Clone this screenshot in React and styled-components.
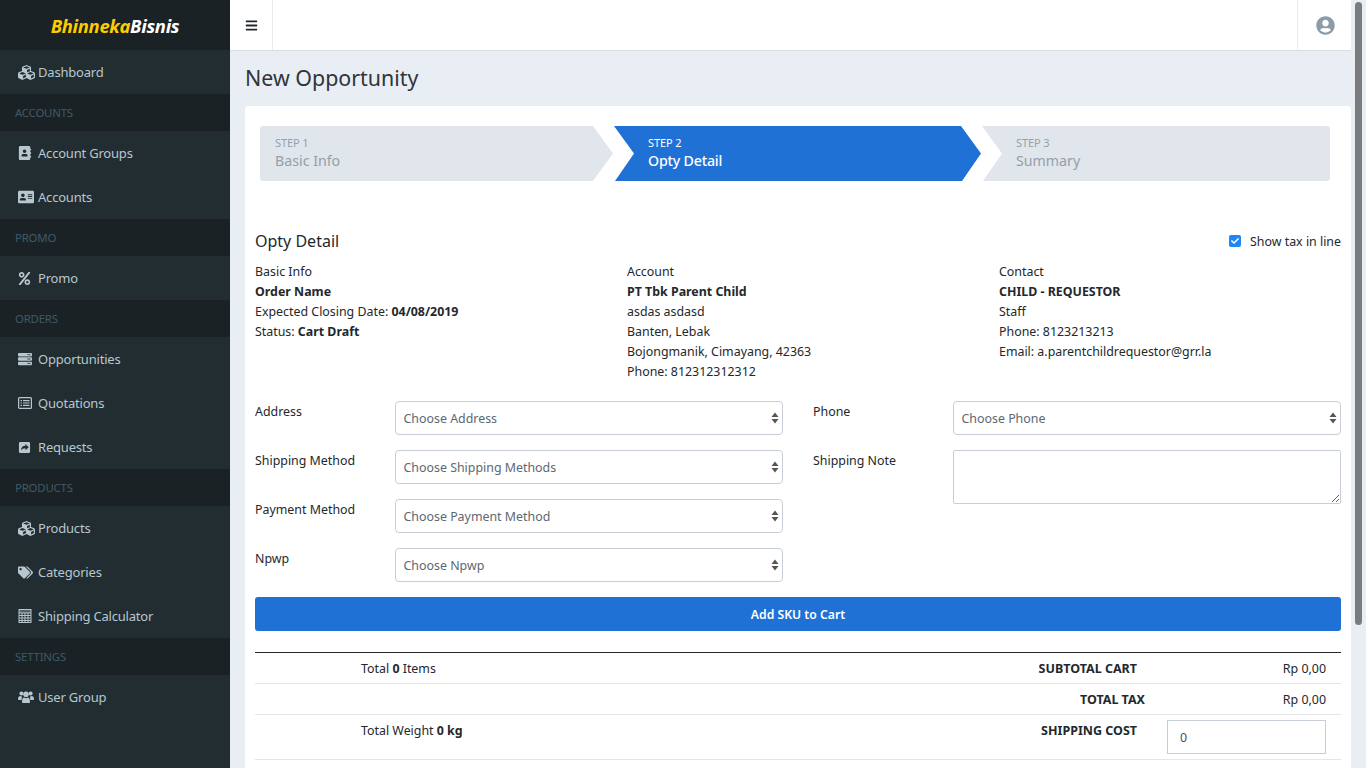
import React from 'react'
import styled, { createGlobalStyle } from 'styled-components'
import {
  FaCubes,
  FaAddressBook,
  FaAddressCard,
  FaPercent,
  FaServer,
  FaTags,
  FaBars,
  FaUserCircle,
  FaCheck,
} from 'react-icons/fa'

const GlobalStyle = createGlobalStyle`
  html, body {
    margin: 0;
    padding: 0;
    height: 768px;
    overflow: hidden;
  }
  body {
    font-family: "Noto Sans", "Liberation Sans", sans-serif;
    font-size: 12.4px;
    color: #23282c;
    background: #e9eef5;
  }
  * { box-sizing: border-box; }
`

const Shell = styled.div`
  display: flex;
  width: 1366px;
  height: 768px;
  overflow: hidden;
  position: relative;
`

const Sidebar = styled.aside`
  width: 230px;
  flex: none;
  background: #222d32;
  display: flex;
  flex-direction: column;
`

const Brand = styled.div`
  height: 50px;
  background: #1a2226;
  display: flex;
  align-items: center;
  justify-content: center;
  font-size: 18.4px;
  font-weight: 700;
  font-style: italic;
  color: #fff;
  letter-spacing: -0.3px;
  span { color: #ffcc00; }
`

const SectionTitle = styled.div`
  height: 37px;
  background: #1a2226;
  color: #3f5a67;
  font-size: 11.4px;
  letter-spacing: -0.2px;
  line-height: 38px;
  padding-left: 15px;
`

const NavItem = styled.div`
  height: 44px;
  display: flex;
  align-items: center;
  padding-left: 18px;
  color: #b8c7ce;
  font-size: 13px;
  letter-spacing: -0.2px;
`

const IconBox = styled.span`
  width: 20px;
  flex: none;
  display: flex;
  align-items: center;
  svg {
    width: ${p => p.$size}px;
    height: ${p => p.$size}px;
    display: block;
  }
`

const Main = styled.div`
  flex: 1;
  min-width: 0;
  display: flex;
  flex-direction: column;
`

const Topbar = styled.header`
  height: 51px;
  flex: none;
  background: #fff;
  border-bottom: 1px solid #d8dde3;
  display: flex;
  justify-content: space-between;
`

const Toggle = styled.div`
  width: 43px;
  border-right: 1px solid #e8ebef;
  display: flex;
  align-items: center;
  justify-content: center;
  color: #23282c;
  svg { width: 13px; height: 13px; }
`

const UserButton = styled.div`
  width: 69px;
  border-left: 1px solid #e8ebef;
  display: flex;
  align-items: center;
  justify-content: center;
  color: #8a9baa;
  padding-right: 14px;
  svg { width: 19px; height: 19px; }
`

const PageTitle = styled.h1`
  margin: 0;
  font-size: 21.4px;
  font-weight: 400;
  line-height: 30px;
  color: #2f3539;
  padding: 12px 0 13px 15px;
`

const Card = styled.section`
  margin: 0 15px;
  background: #fff;
  border-radius: 4px 4px 0 0;
  padding: 20px 10px 0;
  flex: 1;
`

const Steps = styled.div`
  display: flex;
  margin: 0 11px 0 5px;
  height: 55px;
`

const Step = styled.div`
  flex: ${p => p.$grow};
  margin-left: ${p => p.$first ? 0 : '1px'};
  background: ${p => p.$active ? '#1f71d6' : '#e0e6ec'};
  color: ${p => p.$active ? '#fff' : '#94a0ab'};
  border-radius: ${p => p.$radius};
  clip-path: ${p => p.$clip};
  padding: 9px 0 0 ${p => p.$pad};
`

const StepNumber = styled.div`
  font-size: 11px;
  line-height: 15px;
  letter-spacing: -0.1px;
`

const StepName = styled.div`
  font-size: 14.2px;
  line-height: 21px;
  font-weight: ${p => p.$active ? 500 : 400};
  letter-spacing: ${p => p.$active ? '-0.2px' : 0};
`

const DetailHead = styled.div`
  display: flex;
  justify-content: space-between;
  align-items: center;
  margin-top: 48px;
  height: 24px;
`

const DetailTitle = styled.h2`
  margin: 0;
  font-size: 16px;
  font-weight: 400;
`

const ShowTax = styled.label`
  display: flex;
  align-items: center;
  gap: 9px;
  font-size: 12.4px;
`

const CheckBox = styled.span`
  width: 12px;
  height: 12px;
  border-radius: 2px;
  background: #1f86f5;
  color: #fff;
  display: flex;
  align-items: center;
  justify-content: center;
  svg { width: 8px; height: 8px; }
`

const InfoGrid = styled.div`
  display: grid;
  grid-template-columns: 372px 372px 1fr;
  margin-top: 9px;
`

const InfoLine = styled.div`
  line-height: 20px;
  b { font-weight: 700; }
`

const FormGrid = styled.div`
  display: grid;
  grid-template-columns: 528px 528px;
  column-gap: 30px;
  margin-top: 19px;
`

const FormColumn = styled.div`
  display: flex;
  flex-direction: column;
  gap: 15px;
`

const FormRow = styled.div`
  display: flex;
  align-items: flex-start;
`

const FieldLabel = styled.div`
  width: 140px;
  flex: none;
  line-height: 20px;
  padding-top: 1px;
`

const SelectBox = styled.div`
  flex: 1;
  height: 34px;
  border: 1px solid #c8ced6;
  border-radius: 4px;
  padding-left: 7.5px;
  display: flex;
  align-items: center;
  justify-content: space-between;
  color: #5c6873;
  svg { width: 8px; height: 12px; margin-right: 3px; }
`

const NoteArea = styled.textarea`
  flex: 1;
  height: 54px;
  border: 1px solid #c8ced6;
  border-radius: 2px;
  outline: none;
  margin: 0;
  display: block;
`

const AddButton = styled.button`
  display: block;
  width: 100%;
  height: 34px;
  margin-top: 15px;
  border: 0;
  border-radius: 3px;
  background: #1f71d6;
  color: #fff;
  font-family: inherit;
  font-size: 12.2px;
  font-weight: 600;
`

const Totals = styled.div`
  margin-top: 21px;
  border-top: 1px solid #23282c;
`

const TotalRow = styled.div`
  display: grid;
  grid-template-columns: 106px 1fr 200px 196px;
  height: ${p => p.$tall ? '45px' : '31px'};
  border-bottom: 1px solid #e4e7ea;
  align-items: ${p => p.$tall ? 'start' : 'center'};
  padding-top: ${p => p.$tall ? '6px' : '1px'};
`

const TotalText = styled.div`
  grid-column: 2;
  line-height: 20px;
  b { font-weight: 700; }
`

const TotalLabel = styled.div`
  grid-column: 3;
  font-weight: 700;
  font-size: 12.5px;
  text-align: right;
  line-height: 20px;
  padding-right: ${p => p.$shift ? '0' : '8px'};
`

const TotalValue = styled.div`
  grid-column: 4;
  text-align: right;
  padding-right: 15px;
  line-height: 20px;
`

const CostInput = styled.div`
  grid-column: 4;
  width: 159px;
  height: 34px;
  margin: -1px 0 0 22px;
  border: 1px solid #c8ced6;
  color: #44525f;
  line-height: 33px;
  padding-left: 12px;
`

const ScrollTrack = styled.div`
  position: absolute;
  right: 0;
  top: 0;
  width: 15px;
  height: 100%;
  background: #e9eef5;
`

const ScrollThumb = styled.div`
  margin: 2px 0 0 4px;
  width: 7px;
  height: 623px;
  border-radius: 4px;
  background: #7a7c7e;
`

const Spinner = () => (
  <svg viewBox="0 0 8 12">
    <path d="M4 0.5 7.5 5H0.5zM4 11.5 0.5 7h7z" fill="#555" />
  </svg>
)

// old style font awesome glyphs the icon package no longer ships
const ListAltIcon = () => (
  <svg viewBox="0 0 14 14">
    <rect x="0.6" y="1.6" width="12.8" height="10.8" rx="1" fill="none" stroke="currentColor" strokeWidth="1.2" />
    <path d="M2.5 4h1.5v1.2H2.5zM5 4h6.5v1.2H5zM2.5 6.4h1.5v1.2H2.5zM5 6.4h6.5v1.2H5zM2.5 8.8h1.5V10H2.5zM5 8.8h6.5V10H5z" fill="currentColor" />
  </svg>
)

const ShareSquareIcon = () => (
  <svg viewBox="0 0 14 14">
    <path
      fillRule="evenodd"
      d="M2.5 1h9A1.5 1.5 0 0 1 13 2.5v9a1.5 1.5 0 0 1-1.5 1.5h-9A1.5 1.5 0 0 1 1 11.5v-9A1.5 1.5 0 0 1 2.5 1zM8 3.2v2C5 5.3 3.2 7 3.3 10.6c1-1.9 2.3-2.7 4.7-2.7v2.1L11.6 6.6z"
      fill="currentColor"
    />
  </svg>
)

const CalculatorIcon = () => (
  <svg viewBox="0 0 14 14">
    <rect x="1" y="0.5" width="12" height="13" fill="none" stroke="currentColor" strokeWidth="1" />
    <rect x="1" y="0.5" width="12" height="3.5" fill="currentColor" opacity="0.35" />
    <path d="M1 4h12M1 6.5h12M1 9h12M1 11.5h12M4 4v9.5M7 4v9.5M10 4v9.5" stroke="currentColor" strokeWidth="1" fill="none" />
  </svg>
)

const UsersIcon = () => (
  <svg viewBox="0 0 16 14">
    <circle cx="3.4" cy="3.6" r="2" fill="currentColor" />
    <circle cx="12.6" cy="3.6" r="2" fill="currentColor" />
    <circle cx="8" cy="4.2" r="2.8" fill="currentColor" />
    <path d="M0 9c0-2 1-3 2.5-3 .6.6 1.2.8 1.7.8-.3.6-.5 1.4-.5 3.2H1c-.6 0-1-.4-1-1zM16 9c0-2-1-3-2.5-3-.6.6-1.2.8-1.7.8.3.6.5 1.4.5 3.2H15c.6 0 1-.4 1-1zM4.6 13c-.3 0-.6-.3-.6-.7 0-3 .7-4.8 2.2-4.8.5.5 1.1.8 1.8.8s1.3-.3 1.8-.8c1.5 0 2.2 1.8 2.2 4.8 0 .4-.3.7-.6.7z" fill="currentColor" />
  </svg>
)

const Section = ({ title }) => <SectionTitle>{title}</SectionTitle>

const Item = ({ icon: Icon, size, label }) => (
  <NavItem>
    <IconBox $size={size}><Icon /></IconBox>
    {label}
  </NavItem>
)

const Field = ({ label, placeholder }) => (
  <FormRow>
    <FieldLabel>{label}</FieldLabel>
    <SelectBox>
      {placeholder}
      <Spinner />
    </SelectBox>
  </FormRow>
)

export default function App() {
  return (
    <Shell>
      <GlobalStyle />
      <Sidebar>
        <Brand><span>Bhinneka</span>Bisnis</Brand>
        <Item icon={FaCubes} size={17} label="Dashboard" />
        <Section title="ACCOUNTS" />
        <Item icon={FaAddressBook} size={14} label="Account Groups" />
        <Item icon={FaAddressCard} size={16} label="Accounts" />
        <Section title="PROMO" />
        <Item icon={FaPercent} size={13} label="Promo" />
        <Section title="ORDERS" />
        <Item icon={FaServer} size={14} label="Opportunities" />
        <Item icon={ListAltIcon} size={14} label="Quotations" />
        <Item icon={ShareSquareIcon} size={13} label="Requests" />
        <Section title="PRODUCTS" />
        <Item icon={FaCubes} size={17} label="Products" />
        <Item icon={FaTags} size={15} label="Categories" />
        <Item icon={CalculatorIcon} size={14} label="Shipping Calculator" />
        <Section title="SETTINGS" />
        <Item icon={UsersIcon} size={16} label="User Group" />
      </Sidebar>
      <Main>
        <Topbar>
          <Toggle><FaBars /></Toggle>
          <UserButton><FaUserCircle /></UserButton>
        </Topbar>
        <PageTitle>New Opportunity</PageTitle>
        <Card>
          <Steps>
            <Step $grow="0 0 353px" $first $pad="15px" $radius="3px 0 0 3px" $clip="polygon(0 0, 333px 0, 100% 50%, 333px 100%, 0 100%)">
              <StepNumber>STEP 1</StepNumber>
              <StepName>Basic Info</StepName>
            </Step>
            <Step $grow="0 0 367px" $active $pad="34px" $radius="0" $clip="polygon(0 0, 347px 0, 100% 50%, 348px 100%, 1px 100%, 20px 50%)">
              <StepNumber>STEP 2</StepNumber>
              <StepName $active>Opty Detail</StepName>
            </Step>
            <Step $grow="1" $pad="34px" $radius="0 3px 3px 0" $clip="polygon(0 0, 100% 0, 100% 100%, 1px 100%, 20px 50%)">
              <StepNumber>STEP 3</StepNumber>
              <StepName>Summary</StepName>
            </Step>
          </Steps>
          <DetailHead>
            <DetailTitle>Opty Detail</DetailTitle>
            <ShowTax><CheckBox><FaCheck /></CheckBox>Show tax in line</ShowTax>
          </DetailHead>
          <InfoGrid>
            <div>
              <InfoLine>Basic Info</InfoLine>
              <InfoLine><b>Order Name</b></InfoLine>
              <InfoLine>Expected Closing Date: <b>04/08/2019</b></InfoLine>
              <InfoLine>Status: <b>Cart Draft</b></InfoLine>
            </div>
            <div>
              <InfoLine>Account</InfoLine>
              <InfoLine><b>PT Tbk Parent Child</b></InfoLine>
              <InfoLine>asdas asdasd</InfoLine>
              <InfoLine>Banten, Lebak</InfoLine>
              <InfoLine>Bojongmanik, Cimayang, 42363</InfoLine>
              <InfoLine>Phone: 812312312312</InfoLine>
            </div>
            <div>
              <InfoLine>Contact</InfoLine>
              <InfoLine><b>CHILD - REQUESTOR</b></InfoLine>
              <InfoLine>Staff</InfoLine>
              <InfoLine>Phone: 8123213213</InfoLine>
              <InfoLine>Email: a.parentchildrequestor@grr.la</InfoLine>
            </div>
          </InfoGrid>
          <FormGrid>
            <FormColumn>
              <Field label="Address" placeholder="Choose Address" />
              <Field label="Shipping Method" placeholder="Choose Shipping Methods" />
              <Field label="Payment Method" placeholder="Choose Payment Method" />
              <Field label="Npwp" placeholder="Choose Npwp" />
            </FormColumn>
            <FormColumn>
              <Field label="Phone" placeholder="Choose Phone" />
              <FormRow>
                <FieldLabel>Shipping Note</FieldLabel>
                <NoteArea />
              </FormRow>
            </FormColumn>
          </FormGrid>
          <AddButton>Add SKU to Cart</AddButton>
          <Totals>
            <TotalRow>
              <TotalText>Total <b>0</b> Items</TotalText>
              <TotalLabel>SUBTOTAL CART</TotalLabel>
              <TotalValue>Rp 0,00</TotalValue>
            </TotalRow>
            <TotalRow>
              <TotalLabel $shift>TOTAL TAX</TotalLabel>
              <TotalValue>Rp 0,00</TotalValue>
            </TotalRow>
            <TotalRow $tall>
              <TotalText>Total Weight <b>0 kg</b></TotalText>
              <TotalLabel>SHIPPING COST</TotalLabel>
              <CostInput>0</CostInput>
            </TotalRow>
          </Totals>
        </Card>
      </Main>
      <ScrollTrack><ScrollThumb /></ScrollTrack>
    </Shell>
  )
}
